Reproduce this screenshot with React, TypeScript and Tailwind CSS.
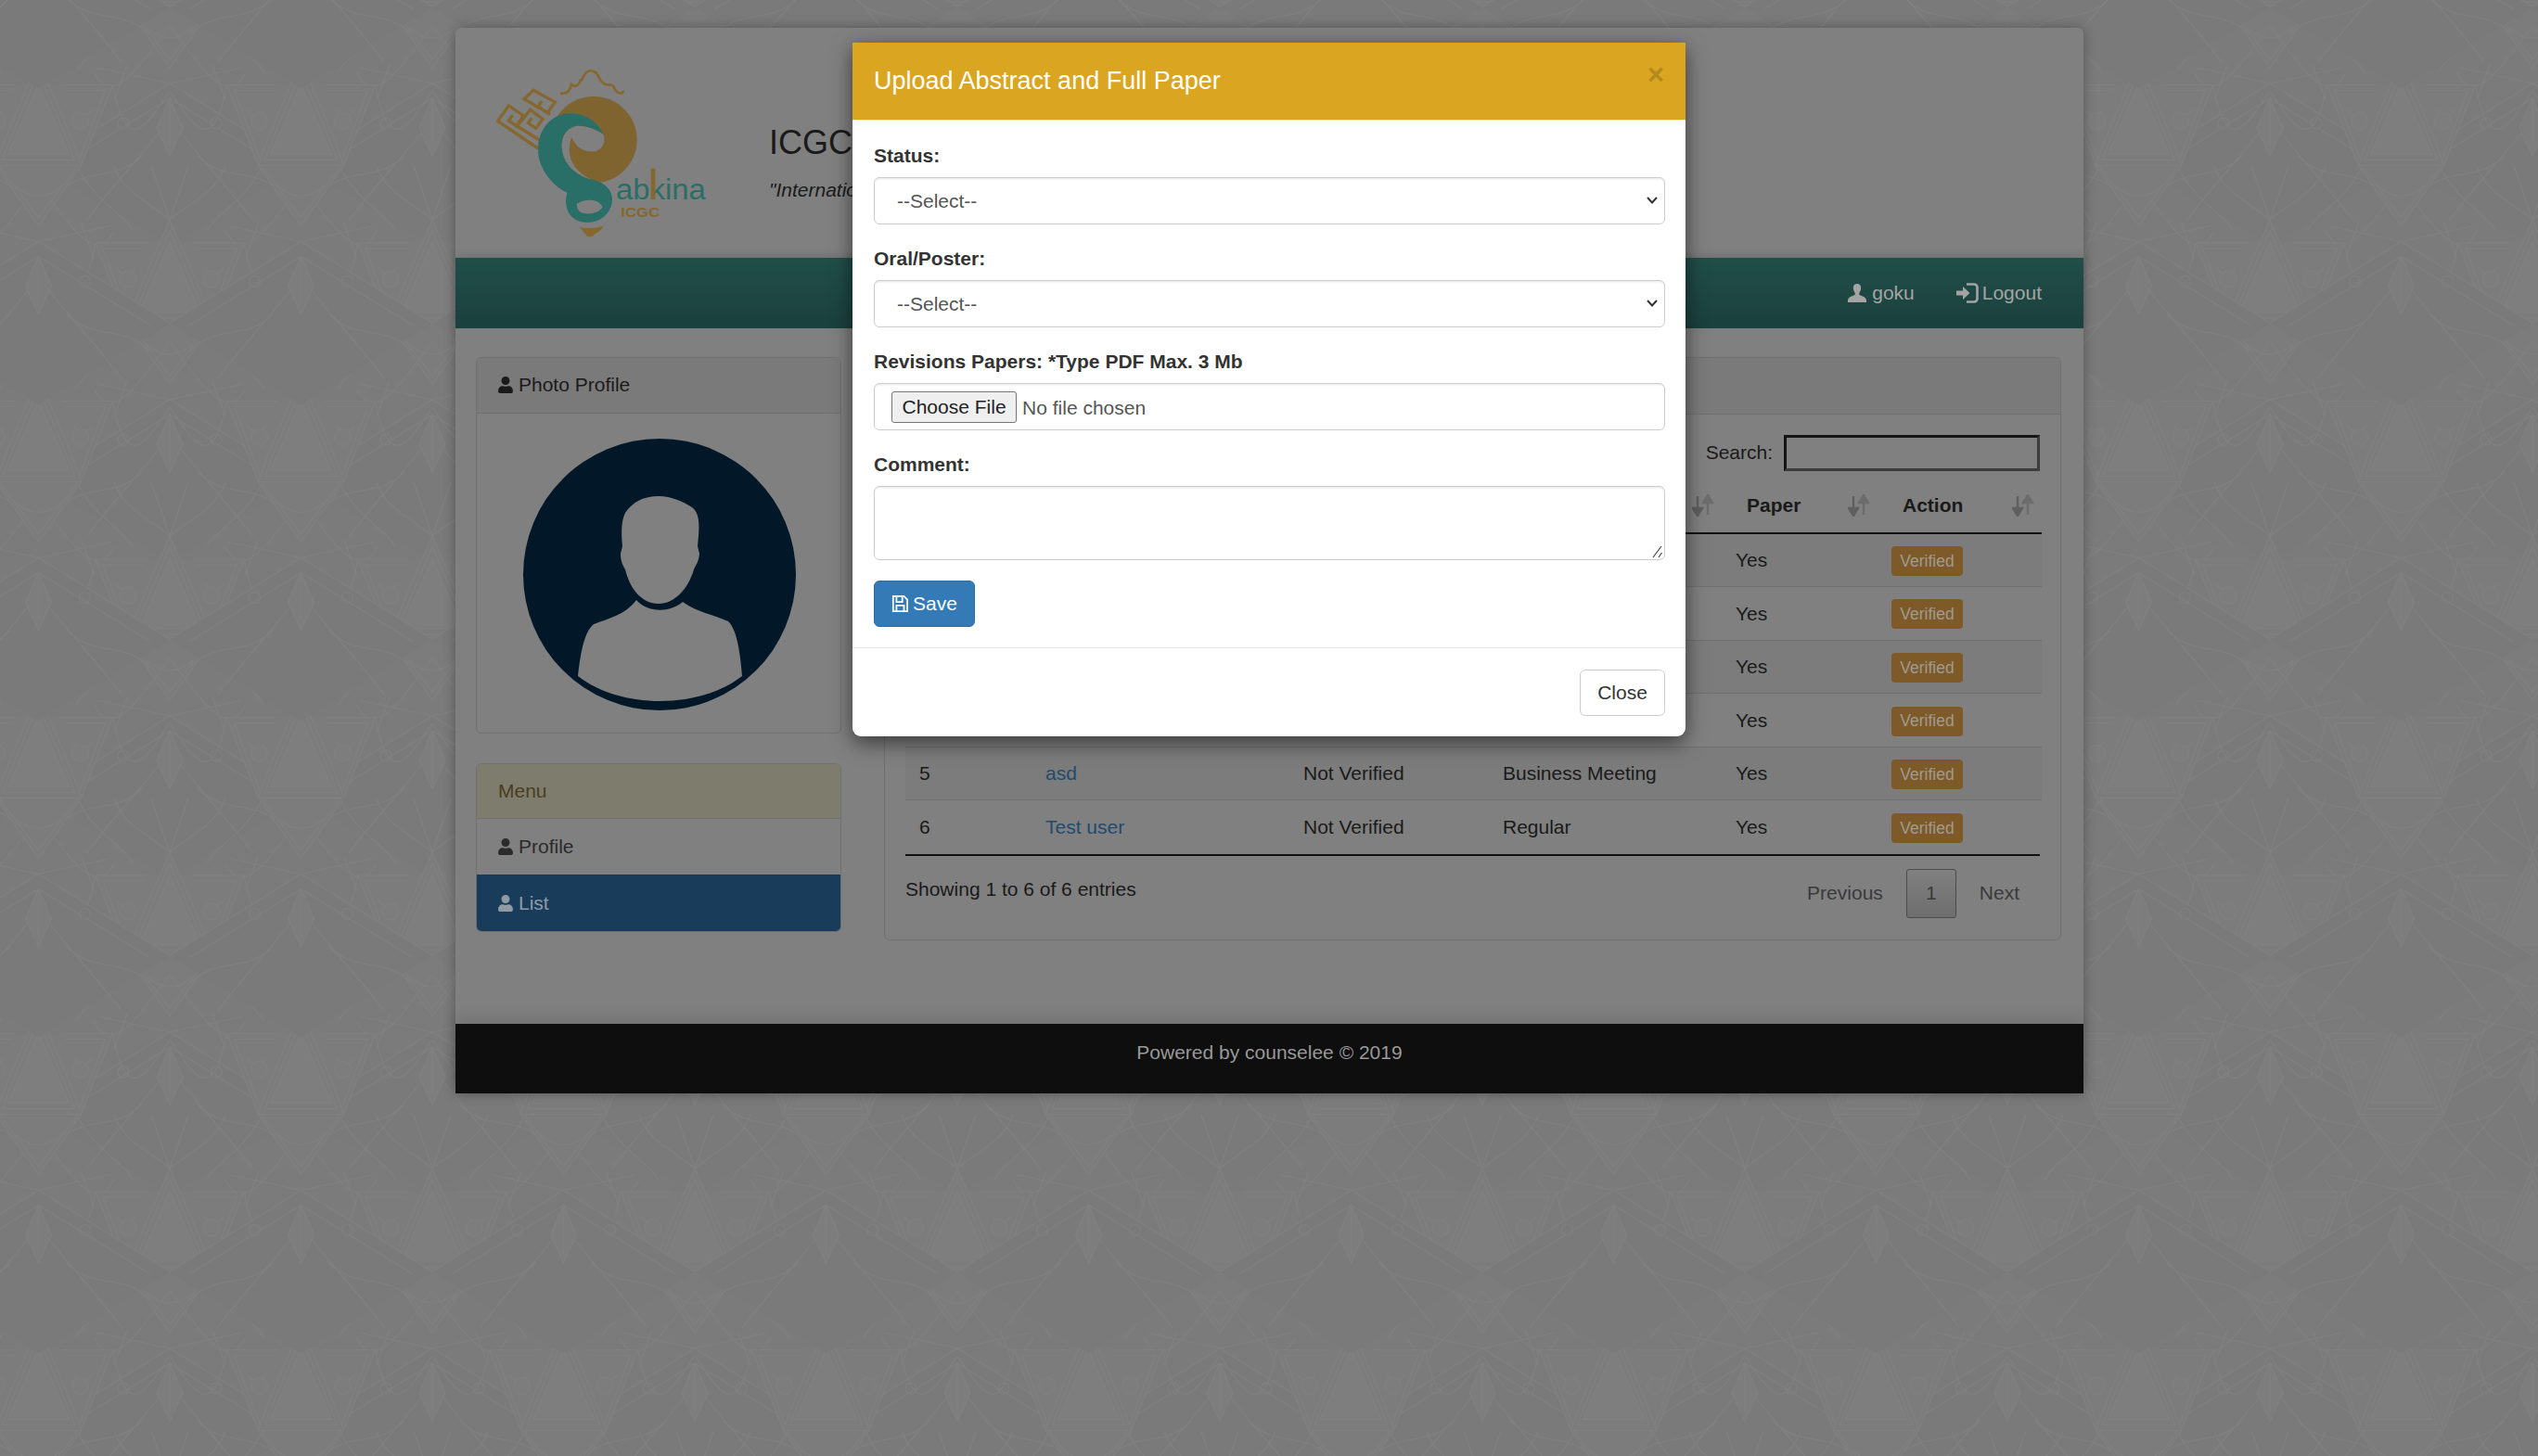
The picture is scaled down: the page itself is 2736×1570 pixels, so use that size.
import React from "react";
import { FaUser } from "react-icons/fa";

const rows = [
  { no: 1, name: "goku", status: "Not Verified", type: "Regular" },
  { no: 2, name: "Test", status: "Not Verified", type: "Regular" },
  { no: 3, name: "user", status: "Not Verified", type: "Regular" },
  { no: 4, name: "demo", status: "Not Verified", type: "Regular" },
  { no: 5, name: "asd", status: "Not Verified", type: "Business Meeting" },
  { no: 6, name: "Test user", status: "Not Verified", type: "Regular" },
];

const columns = [
  { label: "No", width: "w-[136px]" },
  { label: "Name", width: "w-[278px]" },
  { label: "Status", width: "w-[215px]" },
  { label: "Type", width: "w-[251px]" },
  { label: "Paper", width: "w-[168px]" },
  { label: "Action", width: "w-[177px]" },
];

const PatternMotif: React.FC<{ x: number; y: number }> = ({ x, y }) => (
  <g transform={`translate(${x} ${y})`}>
    {/* lattice below */}
    <path d="M-142 170 L0 82 L142 170 L0 258 Z" fill="#7a7a7a" stroke="none" />
    <path d="M-142 170 L0 82 L142 170 M-120 172 L0 98 L120 172" />
    <path d="M-78 65 L0 82 L78 65 M-46 62 L-60 100 M46 62 L60 100" />
    <path d="M-90 230 C-60 190 -30 160 0 120 C30 160 60 190 90 230" />
    <path d="M-120 200 C-90 170 -60 190 -30 160 M120 200 C90 170 60 190 30 160" />
    <path d="M0 98 L0 150 M-14 130 L0 98 L14 130 L0 160 Z" fill="#7d7d7d" />
    <circle cx="-50" cy="125" r="6" />
    <circle cx="50" cy="125" r="6" />
    {/* petals */}
    <path d="M-141 -80 C-115 -40 -95 -10 -80 -87 M141 -80 C115 -40 95 -10 80 -87" />
    <path d="M-141 -150 C-110 -110 -80 -60 -60 -100 M141 -150 C110 -110 80 -60 60 -100" />
    <path d="M-100 -170 C-80 -130 -50 -120 -40 -100 M100 -170 C80 -130 50 -120 40 -100" />
    <path d="M-60 -170 C-50 -140 -20 -130 0 -112 C20 -130 50 -140 60 -170" />
    <path d="M-20 -170 L0 -112 L20 -170" />
    {/* shield */}
    <path d="M-25 -87 L-80 -87 L-46 0 L0 65 L46 0 L80 -87 L25 -87" fill="#7c7c7c" />
    <path d="M-28 -81 L-72 -81 L-40 4 L0 56 L40 4 L72 -81 L28 -81" />
    <path d="M-58 -60 q10 12 20 0 M38 -60 q10 12 20 0 M-25 22 q25 22 50 0" />
    <circle cx="-45" cy="-48" r="9" fill="#7d7d7d" />
    <circle cx="45" cy="-48" r="9" fill="#7d7d7d" />
    {/* arch */}
    <path d="M0 -112 C-18 -70 -35 -35 -46 0 L46 0 C35 -35 18 -70 0 -112 Z" fill="#7c7c7c" />
    <path d="M0 -100 C-15 -65 -30 -32 -39 -6 L39 -6 C30 -32 15 -65 0 -100 Z" />
    <path d="M0 -88 C-12 -60 -25 -30 -33 -12 L33 -12 C25 -30 12 -60 0 -88 Z" fill="#7e7e7e" />
  </g>
);

const motifPlaces = [
  [183, 8], [183, 349], [183, -333], [-100, 8], [-100, 349], [-100, -333],
  [41.5, 178.5], [41.5, -162.5], [41.5, 519.5], [324.5, 178.5], [324.5, -162.5], [324.5, 519.5],
];

const PageBackground = () => (
  <svg className="absolute inset-0 h-full w-full" aria-hidden="true">
    <defs>
      <pattern id="bg-tile" width="283" height="341" patternUnits="userSpaceOnUse">
        <rect width="283" height="341" fill="#7b7b7b" />
        <g fill="none" stroke="#808080" strokeWidth="1.2">
          {motifPlaces.map(([x, y]) => (
            <PatternMotif key={`${x}-${y}`} x={x} y={y} />
          ))}
        </g>
      </pattern>
    </defs>
    <rect width="100%" height="100%" fill="url(#bg-tile)" />
  </svg>
);

const Logo = () => (
  <svg viewBox="0 0 720 600" className="h-[200px] w-[240px] shrink-0" aria-label="Sabkina ICGC">
    <g fill="none" stroke="#86682f" strokeWidth="10">
      <path d="M150 285 L20 197 L55 147 L103 180 L80 212 L55 195 L68 178" />
      <path d="M155 258 L82 213 L125 160 L165 190 L143 220 L118 203 L130 187" />
      <path d="M190 175 L105 125 L135 97 L205 135 L180 170 L150 150 L162 132" />
    </g>
    <circle cx="330" cy="257" r="140" fill="#7f6430" />
    <path
      d="M362 240 C340 190 290 170 250 172 C190 175 150 225 150 290 C150 350 200 410 245 428 C238 445 238 470 250 495 C262 515 285 525 310 525 C355 525 390 490 390 450 C390 410 350 390 320 385 C285 375 235 345 228 290 C222 245 245 215 280 212 C310 212 345 225 362 240 Z"
      fill="#2a6e68"
    />
    <path
      d="M362 240 C340 225 310 212 280 212 C245 215 222 245 228 290 C235 345 285 375 320 385 C275 360 235 320 258 248 C275 285 300 295 325 295 C350 298 372 270 362 240 Z"
      fill="#808080"
    />
    <path d="M275 465 C310 440 355 455 358 475 C350 497 300 502 285 490 C278 482 275 475 275 465 Z" fill="#808080" />
    <path d="M285 540 Q325 548 362 536 Q350 555 335 560 Q325 575 310 570 Q300 560 285 540 Z" fill="#86682f" />
    <path
      d="M222 107 C245 110 255 95 258 78 C268 88 280 85 287 65 C295 70 295 35 320 33 C345 33 345 65 358 70 C370 90 380 70 395 85 C400 105 425 115 425 98"
      fill="none"
      stroke="#86682f"
      strokeWidth="8"
    />
    <text x="402" y="450" fontFamily="Liberation Sans" fontSize="92" fill="#2a6e68" textLength="290" lengthAdjust="spacingAndGlyphs">
      abkina
    </text>
    <rect x="515" y="350" width="14" height="100" fill="#86682f" />
    <text x="418" y="508" fontFamily="Liberation Sans" fontWeight="700" fontSize="44" fill="#86682f" textLength="125" lengthAdjust="spacingAndGlyphs">
      ICGC
    </text>
  </svg>
);

const Avatar = () => (
  <svg viewBox="0 0 294 293" className="h-[293px] w-[294px]">
    <ellipse cx="147" cy="146.5" rx="147" ry="146.5" fill="#021829" />
    <path
      d="M122 174 C134 188 158 188 172 176 C185 186 205 190 221 197 C230 205 234 230 236 256 C190 292 105 292 59 256 C62 230 66 208 76 200 C92 194 110 190 122 174 Z"
      fill="#808080"
    />
    <path
      d="M146 62 C160 62 172 68 182 74 C190 80 190 92 189 105 L188 116 L190 124 C189 134 186 136 184 141 C178 162 163 178 146 178 C128 178 115 162 110 141 C107 136 105 132 105 124 L107 116 C106 105 105 90 110 80 C118 68 130 62 146 62 Z"
      fill="#808080"
    />
  </svg>
);

const GlyphUser = () => (
  <svg viewBox="0 0 24 24" className="h-[22px] w-[22px]" fill="currentColor">
    <path d="M12 1C8.8 1 7.2 3.5 7.5 6.5C7.7 9 9 11 9.5 12L9.5 14C8 15.5 1 16 1 21L1 23L23 23L23 21C23 16 16 15.5 14.5 14L14.5 12C15 11 16.3 9 16.5 6.5C16.8 3.5 15.2 1 12 1Z" />
  </svg>
);

const GlyphLogin = () => (
  <svg viewBox="0 0 24 24" className="h-[24px] w-[24px]" fill="none">
    <path d="M0 9.5h7V5l7.5 7L7 19v-4.5H0z" fill="currentColor" />
    <path d="M11 2.5h8a3.5 3.5 0 0 1 3.5 3.5v12a3.5 3.5 0 0 1-3.5 3.5h-8" stroke="currentColor" strokeWidth="2.6" />
  </svg>
);

const GlyphSave = () => (
  <svg viewBox="0 0 20 20" className="h-[18px] w-[18px]" fill="none" stroke="currentColor" strokeWidth="2">
    <path d="M2 1h13l4 4v14H2z" />
    <path d="M6 2v6h7V2M6 19v-7h9v7" />
  </svg>
);

const SortIcon = () => (
  <svg viewBox="0 0 24 24" className="absolute right-[8px] top-1/2 h-[24px] w-[24px] -translate-y-1/2">
    <path d="M6 2v15M1 15l5 8 5-8z" fill="#5f5f5f" stroke="#5f5f5f" strokeWidth="2.4" />
    <path d="M17 22V8M12 9l5-8 5 8z" fill="#6c6c6c" stroke="#6c6c6c" strokeWidth="2.4" />
  </svg>
);

const Field: React.FC<{ label: string; children: React.ReactNode }> = ({ label, children }) => (
  <div>
    <label className="mb-[8px] block h-[30px] font-bold leading-[30px] text-[#333]">{label}</label>
    {children}
  </div>
);

const fieldClass =
  "block w-full rounded-[6px] border border-[#ccc] bg-white text-[#555] shadow-[inset_0_1.5px_1.5px_rgba(0,0,0,0.075)]";

const SelectField = () => (
  <div className="relative">
    <select className={`${fieldClass} h-[51px] appearance-none pl-[24px] pt-[1px]`}>
      <option>--Select--</option>
    </select>
    <svg viewBox="0 0 12 8" className="absolute right-[8px] top-[21px] h-[8px] w-[12px]" fill="none" stroke="#333" strokeWidth="2">
      <path d="M1 1l5 5.5L11 1" />
    </svg>
  </div>
);

const UploadModal = () => (
  <div className="absolute left-[919px] top-[46px] w-[898px] rounded-b-[9px] rounded-t-[2px] bg-white shadow-[0_7px_22px_rgba(0,0,0,0.55)]">
    <div className="relative h-[84px] rounded-t-[2px] border-b border-[#e5e5e5] bg-[#daa520] pl-[23px] pt-[21px]">
      <h4 className="text-[27px] leading-[40px] text-white">Upload Abstract and Full Paper</h4>
      <span className="absolute right-[23px] top-[16px] text-[31px] font-bold leading-[38px] text-[#b48a1c]">×</span>
    </div>
    <div className="flex flex-col gap-[22px] pb-[22.5px] pl-[23px] pr-[22px] pt-[22.5px]">
      <Field label="Status:">
        <SelectField />
      </Field>
      <Field label="Oral/Poster:">
        <SelectField />
      </Field>
      <Field label="Revisions Papers: *Type PDF Max. 3 Mb">
        <input
          type="file"
          className={`${fieldClass} h-[51px] px-[18px] py-[8px] file:mr-[6px] file:rounded-[3px] file:border file:border-[#767676] file:bg-[#efefef] file:px-[10.5px] file:py-[0.5px] file:text-[#222]`}
        />
      </Field>
      <Field label="Comment:">
        <div className="relative">
          <textarea className={`${fieldClass} h-[80px] resize-none px-[18px] py-[9px]`} />
          <svg viewBox="0 0 12 14" className="absolute bottom-[2px] right-[2px] h-[14px] w-[12px]" fill="none" stroke="#444" strokeWidth="1.2">
            <path d="M1 13L10 1M7 13l3.5-5" />
          </svg>
        </div>
      </Field>
      <button className="flex h-[50px] w-[109px] items-center justify-center gap-[5px] rounded-[6px] border border-[#2e6da4] bg-[#337ab7] text-white">
        <GlyphSave />
        Save
      </button>
    </div>
    <div className="flex justify-end border-t border-[#e5e5e5] pb-[22.5px] pl-[23px] pr-[22px] pt-[22.5px]">
      <button className="h-[50px] w-[92px] rounded-[6px] border border-[#ccc] bg-white text-[#333]">Close</button>
    </div>
  </div>
);

export default function App() {
  return (
    <div className="relative min-h-[1570px] overflow-hidden font-['Liberation_Sans',Arial,sans-serif] text-[21px] text-[#1a1a1a]">
      <PageBackground />
      <div className="relative ml-[491px] mt-[30px] w-[1755px] rounded-t-[6px] bg-[#808080] shadow-[0_0_14px_rgba(0,0,0,0.3)]">
        <header className="flex h-[248px] pl-[39px] pt-[35px]">
          <Logo />
          <div className="ml-[59px] mt-[69px]">
            <h3 className="text-[36px] leading-[40px]">ICGC</h3>
            <p className="mt-[16px] italic leading-[30px]">"International</p>
          </div>
        </header>

        <nav className="flex h-[76px] items-center justify-end gap-[45px] bg-gradient-to-b from-[#204e49] to-[#1b403d] pr-[45px] text-[#a4a4a4] shadow-[0_-3px_8px_rgba(0,0,0,0.12)]">
          <span className="flex items-center gap-[5px]">
            <GlyphUser />
            goku
          </span>
          <span className="flex items-center gap-[4px]">
            <GlyphLogin />
            Logout
          </span>
        </nav>

        <main className="flex h-[750px] items-start gap-[46px] pl-[22px] pr-[24px] pt-[31px]">
          <aside className="w-[394px] shrink-0">
            <section className="h-[406px] rounded-[6px] border border-[#707070]">
              <div className="flex h-[60px] items-center gap-[6px] border-b border-[#707070] bg-[#7a7a7a] pb-[1px] pl-[23px]">
                <FaUser className="h-[18px] w-[16px]" />
                Photo Profile
              </div>
              <div className="flex justify-center pl-[2px] pt-[27px]">
                <Avatar />
              </div>
            </section>
            <section className="mt-[32px] h-[182px] overflow-hidden rounded-[6px] border border-[#707070]">
              <div className="flex h-[59px] items-center border-b border-[#707070] bg-[#7e7c6d] pl-[23px] text-[#4a3d22]">Menu</div>
              <div className="flex h-[60px] items-center gap-[6px] pl-[23px] text-[#2b2b2b]">
                <FaUser className="h-[18px] w-[16px]" />
                Profile
              </div>
              <div className="flex h-[61px] items-center gap-[6px] bg-[#1a3c5b] pl-[23px] text-[#8f9aa5]">
                <FaUser className="h-[18px] w-[16px]" />
                List
              </div>
            </section>
          </aside>

          <section className="h-[629px] w-[1269px] rounded-[6px] border border-[#707070] px-[22px]">
            <div className="-mx-[22px] flex h-[61px] items-center border-b border-[#707070] bg-[#7a7a7a] pl-[23px]">List</div>
            <div className="flex h-[68px] items-center justify-end gap-[12px] pt-[14px]">
              <label htmlFor="search">Search:</label>
              <input
                id="search"
                className="h-[39px] w-[276px] border-[3px] border-b-[#3d3d3d] border-l-[#141414] border-r-[#3d3d3d] border-t-[#141414]"
              />
            </div>
            <table className="w-full table-fixed border-collapse">
              <thead>
                <tr className="h-[60px] border-b-2 border-[#111]">
                  {columns.map((col) => (
                    <th key={col.label} className={`${col.width} relative pl-[27px] text-left font-bold`}>
                      {col.label}
                      <SortIcon />
                    </th>
                  ))}
                </tr>
              </thead>
              <tbody>
                {rows.map((row, i) => (
                  <tr
                    key={row.no}
                    className={`h-[57.6px] border-[#6f6f6f] ${i < rows.length - 1 ? "border-b" : ""} ${i % 2 === 0 ? "bg-[#7c7c7c]" : ""}`}
                  >
                    <td className="pl-[15px]">{row.no}</td>
                    <td className="pl-[15px] text-[#234a6e]">{row.name}</td>
                    <td className="pl-[15px]">{row.status}</td>
                    <td className="pl-[15px]">{row.type}</td>
                    <td className="pl-[15px]">Yes</td>
                    <td className="pl-[15px]">
                      <span className="mt-[2px] inline-flex h-[32px] w-[77px] items-center justify-center rounded-[4px] bg-[#7d5a27] text-[17.5px] text-[#a09a92]">
                        Verified
                      </span>
                    </td>
                  </tr>
                ))}
              </tbody>
            </table>
            <div className="border-t-2 border-[#111]" />
            <div className="flex items-start justify-between">
              <div className="pt-[20px]">Showing 1 to 6 of 6 entries</div>
              <div className="flex items-center pr-[22px] pt-[14px] text-[#3a3a3a]">
                <span>Previous</span>
                <span className="ml-[25px] flex h-[53px] w-[54px] items-center justify-center rounded-[3px] border border-[#4b4b4b] bg-gradient-to-b from-[#808080] to-[#6e6e6e]">
                  1
                </span>
                <span className="ml-[25px]">Next</span>
              </div>
            </div>
          </section>
        </main>

        <footer className="relative h-[75px] bg-[#0e0e0e] pt-[15px] text-center text-[#999] shadow-[0_-8px_14px_rgba(0,0,0,0.1)]">
          Powered by counselee © 2019
        </footer>
      </div>
      <UploadModal />
    </div>
  );
}
